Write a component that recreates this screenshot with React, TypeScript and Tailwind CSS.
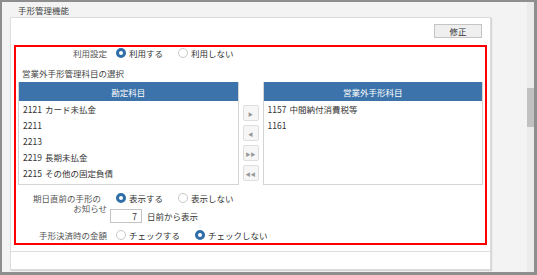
import React from 'react';

const FONT = "font-['Noto_Sans_CJK_JP','Noto_Sans',sans-serif]";

const LEFT_ITEMS = [
  { code: '2121', name: 'カード未払金' },
  { code: '2211', name: '' },
  { code: '2213', name: '' },
  { code: '2219', name: '長期未払金' },
  { code: '2215', name: 'その他の固定負債' },
];

const RIGHT_ITEMS = [
  { code: '1157', name: '中間納付消費税等' },
  { code: '1161', name: '' },
];

function Radio({ checked, label }: { checked?: boolean; label: string }) {
  return (
    <div className="flex items-center gap-[3px]">
      {checked ? (
        <span className="w-[10px] h-[10px] rounded-full border-[3px] border-[#2f6ea6] bg-white" />
      ) : (
        <span className="w-[10px] h-[10px] rounded-full border border-[#c9c9c9] bg-white" />
      )}
      <span className="text-[#333]">{label}</span>
    </div>
  );
}

function ListBox({ title, items }: { title: string; items: { code: string; name: string }[] }) {
  return (
    <div className="flex-1 flex flex-col border border-[#d4d4d4] border-t-0">
      <div className="h-[19px] bg-[#3b73aa] text-white flex items-center justify-center">{title}</div>
      <div className="h-[83px] bg-white pl-[4px]">
        {items.map((it) => (
          <div key={it.code} className="h-[16px] flex items-center text-[#333]">
            <span className="w-[22px]">{it.code}</span>
            <span>{it.name}</span>
          </div>
        ))}
      </div>
    </div>
  );
}

function MoveButton({ glyph }: { glyph: string }) {
  return (
    <button className="w-[16px] h-[16px] bg-[#f6f6f6] border border-[#dedede] rounded-[2px] text-[#999] text-[5px] leading-none flex items-center justify-center">
      {glyph}
    </button>
  );
}

export default function App() {
  return (
    <div className={`w-[537px] h-[275px] flex bg-[#f3f3f3] border-t-2 border-l-2 border-r-[3px] border-b-[3px] border-[#8e8e8e] text-[8.5px] leading-[10px] ${FONT}`}>
      <div className="flex-1 flex flex-col">
        <div className="h-[15px] pl-[16px] flex items-center text-[#444]">手形管理機能</div>
        <div className="ml-[8px] w-[481px] h-[253px] bg-white border border-[#dcdcdc] shadow-[1px_1px_1px_rgba(0,0,0,0.12)] flex flex-col">
          <div className="flex justify-end pt-[6px] pr-[8px]">
            <button className="w-[48px] h-[14px] bg-[#efefef] border border-[#c4c4c4] text-[#333] flex items-center justify-center">
              修正
            </button>
          </div>
          <div className="mt-[7px] mx-[3px] h-[200px] border-2 border-[#ff0000] flex flex-col">
            <div className="h-[11px] flex items-center">
              <div className="w-[91px] text-right text-[#555]">利用設定</div>
              <div className="ml-[9px] flex items-center gap-[15px]">
                <Radio checked label="利用する" />
                <Radio label="利用しない" />
              </div>
            </div>
            <div className="mt-[10px] pl-[6px] h-[10px] text-[#444]">営業外手形管理科目の選択</div>
            <div className="mt-[4px] pl-[2px] pr-[2px] flex gap-[4px]">
              <ListBox title="勘定科目" items={LEFT_ITEMS} />
              <div className="w-[16px] pt-[23px] flex flex-col gap-[4px]">
                <MoveButton glyph="▶" />
                <MoveButton glyph="◀" />
                <MoveButton glyph="▶▶" />
                <MoveButton glyph="◀◀" />
              </div>
              <ListBox title="営業外手形科目" items={RIGHT_ITEMS} />
            </div>
            <div className="mt-[8px] flex items-start">
              <div className="w-[91px] text-right text-[#555]">
                <div className="pr-[6px]">期日直前の手形の</div>
                <div>お知らせ</div>
              </div>
              <div className="flex flex-col">
                <div className="ml-[9px] h-[10px] flex items-center gap-[15px]">
                  <Radio checked label="表示する" />
                  <Radio label="表示しない" />
                </div>
                <div className="ml-[3px] mt-[6px] flex items-center">
                  <div className="w-[32px] h-[14px] border border-[#c4c4c4] bg-white text-right pr-[4px] flex items-center justify-end text-[#333]">
                    7
                  </div>
                  <span className="ml-[5px] text-[#333]">日前から表示</span>
                </div>
              </div>
            </div>
            <div className="mt-[7px] h-[10px] flex items-center">
              <div className="w-[91px] text-right text-[#555]">手形決済時の金額</div>
              <div className="ml-[9px] flex items-center gap-[15px]">
                <Radio label="チェックする" />
                <Radio checked label="チェックしない" />
              </div>
            </div>
          </div>
          <div className="mt-[6px] h-px bg-[#dddddd]" />
        </div>
      </div>
      <div className="w-[7px] bg-[#ebebeb] pt-[86px]">
        <div className="h-[39px] bg-[#c1c1c1]" />
      </div>
    </div>
  );
}
